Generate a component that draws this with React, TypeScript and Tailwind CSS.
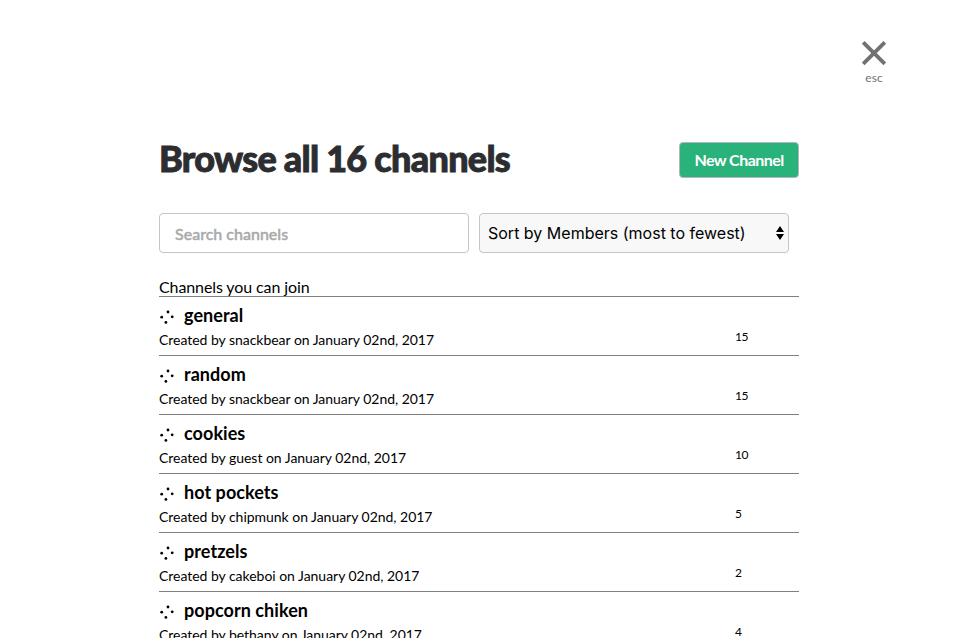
import React from "react";

type Channel = { name: string; creator: string; members: number };

const channels: Channel[] = [
  { name: "general", creator: "snackbear", members: 15 },
  { name: "random", creator: "snackbear", members: 15 },
  { name: "cookies", creator: "guest", members: 10 },
  { name: "hot pockets", creator: "chipmunk", members: 5 },
  { name: "pretzels", creator: "cakeboi", members: 2 },
  { name: "popcorn chiken", creator: "bethany", members: 4 },
];

function DotsIcon() {
  return (
    <svg width="16" height="16" viewBox="0 0 16 16" className="mt-[3px] shrink-0">
      <circle cx="9" cy="3" r="1.4" />
      <circle cx="2.7" cy="8.2" r="1.4" />
      <circle cx="13.2" cy="7.8" r="1.4" />
      <circle cx="6.9" cy="13.4" r="1.4" />
    </svg>
  );
}

function ChannelRow({ channel }: { channel: Channel }) {
  return (
    <li className="flex h-[59px] justify-between border-t border-[#808080]">
      <div>
        <div className="flex h-[35px] items-center gap-[9px] pt-px">
          <DotsIcon />
          <h2 className="text-[18px] font-bold leading-[22px] tracking-[0.06px]">{channel.name}</h2>
        </div>
        <p className="text-[14px] leading-[16px] tracking-[-0.03px]">Created by {channel.creator} on January 02nd, 2017</p>
      </div>
      <span className="mt-[33px] w-[64px] text-[12px] leading-[14px] tracking-[-0.5px]">{channel.members}</span>
    </li>
  );
}

export default function App() {
  return (
    <div className="relative h-[638px] overflow-hidden bg-white font-['Lato',sans-serif] text-black">
      <button className="absolute left-[861px] top-[41px] flex w-[26px] flex-col items-center text-[#717274]">
        <svg width="26" height="25" viewBox="0 0 26 25" fill="none" stroke="currentColor" strokeWidth="3.8">
          <path d="M2.2 1.3L23.8 22.9M23.8 1.3L2.2 22.9" />
        </svg>
        <span className="mt-[5px] text-[12px] leading-[14px]">esc</span>
      </button>
      <main className="ml-[159px] w-[640px] pt-[136px]">
        <header className="flex h-[48px] items-center justify-between">
          <h1 className="mb-[5px] text-[36px] font-black leading-[44px] tracking-[-0.72px] text-[#2c2d30] [-webkit-text-stroke:0.9px_#2c2d30]">Browse all 16 channels</h1>
          <button className="h-[36px] w-[120px] rounded-[4px] border border-[#b5b5b5] bg-[#2ab27b] text-[16px] font-bold tracking-[-0.55px] text-white">New Channel</button>
        </header>
        <div className="mt-[29px] flex gap-[10px]">
          <input placeholder="Search channels" className="h-[40px] w-[310px] rounded-[4px] border border-[#c5c5c5] px-[15px] text-[16px] font-medium placeholder:text-[#a9a9a9] placeholder:[-webkit-text-stroke:0.4px_#a9a9a9]" />
          <div className="flex h-[40px] w-[310px] items-center justify-between rounded-[4px] border border-[#c5c5c5] bg-[#f8f8f8] pl-[8px] pr-[4px] font-['Inter',sans-serif] text-[16px]">
            <span>Sort by Members (most to fewest)</span>
            <svg width="8" height="14" viewBox="0 0 8 14"><path d="M4 0L8 6H0zM4 14L0 8H8z" /></svg>
          </div>
        </div>
        <p className="mt-[24px] h-[19px] text-[16px] leading-[20px] tracking-[-0.1px]">Channels you can join</p>
        <ul>{channels.map((c) => <ChannelRow key={c.name} channel={c} />)}</ul>
      </main>
    </div>
  );
}
